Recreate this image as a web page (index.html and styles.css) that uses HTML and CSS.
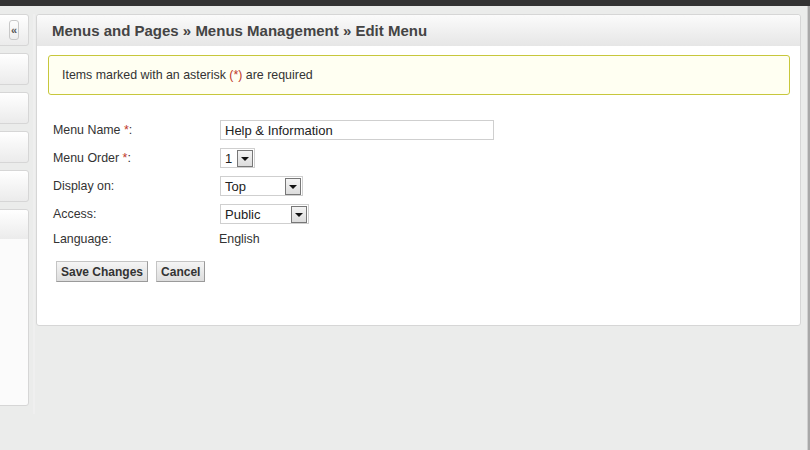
FILE: index.html
```html
<!DOCTYPE html>
<html>
<head>
<meta charset="utf-8">
<link rel="stylesheet" href="styles.css">
</head>
<body>
<div class="topbar"></div>
<div class="layout">
  <div class="sidebar">
    <div class="spanel first"><span class="collapse">«</span></div>
    <div class="spanel"></div>
    <div class="spanel"></div>
    <div class="spanel"></div>
    <div class="spanel"></div>
    <div class="spanel last"><div class="last-head"></div></div>
  </div>
  <div class="splitter"></div>
  <div class="main">
    <div class="main-head">Menus and Pages » Menus Management » Edit Menu</div>
    <div class="notice">Items marked with an asterisk <span class="req">(*)</span> are required</div>
    <div class="form">
      <div class="label"><span>Menu Name <span class="req">*</span>:</span></div>
      <div class="control"><div class="input">Help &amp; Information</div></div>
      <div class="label"><span>Menu Order <span class="req">*</span>:</span></div>
      <div class="control"><div class="select w-order"><span class="val">1</span><span class="arrow"></span></div></div>
      <div class="label"><span>Display on:</span></div>
      <div class="control"><div class="select w-top"><span class="val">Top</span><span class="arrow"></span></div></div>
      <div class="label"><span>Access:</span></div>
      <div class="control"><div class="select w-public"><span class="val">Public</span><span class="arrow"></span></div></div>
      <div class="label short"><span>Language:</span></div>
      <div class="control short text"><span>English</span></div>
    </div>
    <div class="buttons">
      <button class="btn">Save Changes</button>
      <button class="btn">Cancel</button>
    </div>
  </div>
  <div class="edge"></div>
</div>
</body>
</html>
```
FILE: styles.css
```css
html, body {
  margin: 0;
  padding: 0;
}
body {
  background: #ebeceb;
  font-family: "Liberation Sans", Arial, sans-serif;
  font-size: 12.4px;
  color: #333;
  height: 450px;
  overflow: hidden;
}
.topbar {
  height: 6px;
  background: #333333;
}
.layout {
  display: flex;
  align-items: flex-start;
  padding-top: 8px;
}
.sidebar {
  width: 39px;
  margin-left: -10px;
  display: flex;
  flex-direction: column;
  gap: 7px;
  flex: none;
}
.spanel {
  height: 30px;
  border: 1px solid #d6d6d6;
  border-radius: 3px;
  background: linear-gradient(#ffffff, #ebebeb);
}
.spanel.first {
  display: flex;
  align-items: center;
  justify-content: flex-end;
  padding-right: 9px;
}
.collapse {
  display: flex;
  align-items: center;
  justify-content: center;
  width: 8px;
  height: 18px;
  border: 1px solid #c8c8c8;
  border-radius: 3px;
  background: linear-gradient(#fdfdfd, #eeeeee);
  color: #555;
  font-size: 11px;
  font-weight: bold;
  line-height: 1;
}
.spanel.last {
  height: 195px;
  background: #fbfbfb;
}
.last-head {
  height: 29px;
  background: linear-gradient(#ffffff, #ebebeb);
  border-radius: 3px 3px 0 0;
}
.splitter {
  width: 7px;
  flex: none;
  height: 400px;
  display: flex;
  justify-content: flex-end;
}
.splitter::after {
  content: "";
  width: 2px;
  margin-right: 1px;
  background: #efefef;
}
.main {
  flex: 1;
  background: #ffffff;
  border: 1px solid #d6d6d6;
  border-radius: 3px;
  padding-bottom: 43px;
}
.main-head {
  height: 31px;
  line-height: 32px;
  padding-left: 15px;
  font-size: 15px;
  font-weight: bold;
  color: #444;
  background: linear-gradient(#fbfbfb, #e6e6e6);
  border-radius: 3px 3px 0 0;
}
.notice {
  margin: 9px 10px 0 11px;
  height: 38px;
  line-height: 38px;
  padding-left: 13px;
  border: 1px solid #c7c73c;
  border-radius: 3px;
  background: #fffff2;
  color: #333;
}
.req {
  color: #c0392b;
}
.form {
  margin-top: 25px;
  padding-left: 16px;
  display: grid;
  grid-template-columns: 167px 1fr;
  row-gap: 8px;
}
.label, .control {
  height: 20px;
  display: flex;
  align-items: center;
}
.label.short, .control.short {
  height: 14px;
}
.control.text {
  margin-left: -1px;
}
.input {
  width: 268px;
  height: 18px;
  border: 1px solid #cfcfcf;
  padding-left: 4px;
  display: flex;
  align-items: center;
  font-size: 13px;
  color: #222;
}
.select {
  height: 18px;
  border: 1px solid #cfcfcf;
  display: flex;
  align-items: center;
  justify-content: space-between;
  padding: 0 1px 0 4px;
  font-size: 13px;
  color: #222;
}
.w-order { width: 28px; }
.w-top { width: 76px; }
.w-public { width: 82px; }
.arrow {
  width: 14px;
  height: 15px;
  border: 1px solid #777;
  background: linear-gradient(#f4f4f4, #dcdcdc);
  display: flex;
  align-items: center;
  justify-content: center;
}
.arrow::after {
  content: "";
  border-left: 4px solid transparent;
  border-right: 4px solid transparent;
  border-top: 4px solid #111;
  margin-top: 1px;
}
.buttons {
  display: flex;
  gap: 8px;
  margin-top: 15px;
  padding-left: 19px;
}
.btn {
  font-family: "Liberation Sans", Arial, sans-serif;
  font-size: 12px;
  font-weight: bold;
  color: #333;
  height: 21px;
  padding: 0 4px;
  margin: 0;
  border: 1px solid #c4c4c4;
  border-right-color: #9a9a9a;
  border-bottom-color: #9a9a9a;
  background: linear-gradient(#f5f5f5, #dddddd);
  border-radius: 0;
}
.edge {
  width: 2px;
  margin-left: 6px;
  height: 450px;
  margin-top: -8px;
  background: #a8a8a8;
  border-left: 1px solid #d0d0d0;
  flex: none;
}
```
